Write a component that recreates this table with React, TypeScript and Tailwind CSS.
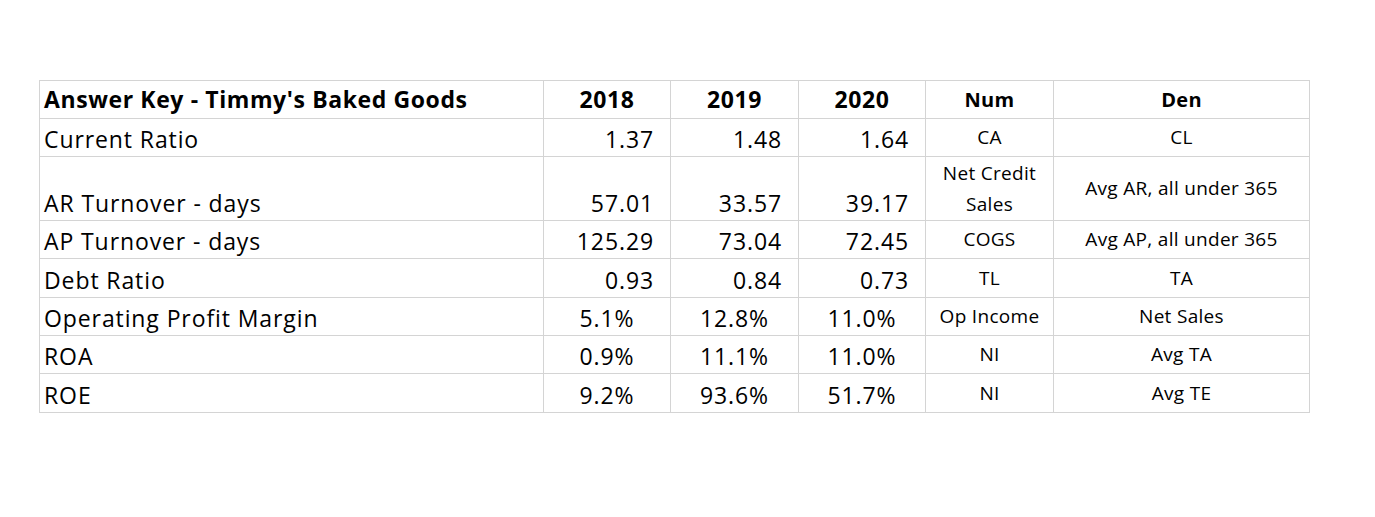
const rows = [
  { label: 'Current Ratio', v: ['1.37', '1.48', '1.64'], pct: false, num: 'CA', den: 'CL', h: 'h-[38px]' },
  { label: 'AR Turnover - days', v: ['57.01', '33.57', '39.17'], pct: false, num: 'Net Credit Sales', den: 'Avg AR, all under 365', tall: true, h: 'h-[64px]' },
  { label: 'AP Turnover - days', v: ['125.29', '73.04', '72.45'], pct: false, num: 'COGS', den: 'Avg AP, all under 365', h: 'h-[38px]' },
  { label: 'Debt Ratio', v: ['0.93', '0.84', '0.73'], pct: false, num: 'TL', den: 'TA', h: 'h-[39px]' },
  { label: 'Operating Profit Margin', v: ['5.1%', '12.8%', '11.0%'], pct: true, num: 'Op Income', den: 'Net Sales', h: 'h-[38px]' },
  { label: 'ROA', v: ['0.9%', '11.1%', '11.0%'], pct: true, num: 'NI', den: 'Avg TA', h: 'h-[38px]' },
  { label: 'ROE', v: ['9.2%', '93.6%', '51.7%'], pct: true, num: 'NI', den: 'Avg TE', h: 'h-[39px]' },
];

const cell = 'border border-[#d4d4d4]';

export default function App() {
  return (
    <div className="w-[1375px] h-[517px] bg-white pt-[80px] pl-[39px] text-black" style={{ fontFamily: '"Open Sans", "Liberation Sans", sans-serif' }}>
      <table className="table-fixed border-collapse">
        <colgroup>
          <col className="w-[504px]" />
          <col className="w-[127px]" />
          <col className="w-[128px]" />
          <col className="w-[127px]" />
          <col className="w-[128px]" />
          <col className="w-[256px]" />
        </colgroup>
        <thead>
          <tr className="h-[38px] font-bold text-[23px] tracking-[0.6px]">
            <th className={`${cell} text-left pl-[4px] align-middle`}>Answer Key - Timmy's Baked Goods</th>
            <th className={`${cell} text-center`}>2018</th>
            <th className={`${cell} text-center`}>2019</th>
            <th className={`${cell} text-center`}>2020</th>
            <th className={`${cell} text-center text-[20px] tracking-[0.3px]`}>Num</th>
            <th className={`${cell} text-center text-[20px] tracking-[0.3px]`}>Den</th>
          </tr>
        </thead>
        <tbody>
          {rows.map((r) => (
            <tr key={r.label} className={r.h}>
              <td className={`${cell} pl-[4px] align-bottom pb-[2px] text-[23px] leading-[30px] tracking-[0.9px]`}>{r.label}</td>
              {r.v.map((x, i) => (
                <td
                  key={i}
                  className={
                    r.pct
                      ? `${cell} text-center align-bottom pb-[2px] text-[23px] leading-[30px] tracking-[0.9px]`
                      : `${cell} text-right pr-[16px] align-bottom pb-[2px] text-[23px] leading-[30px] tracking-[0.9px]`
                  }
                >
                  {x}
                </td>
              ))}
              <td
                className={
                  r.tall
                    ? `${cell} text-center align-middle text-[19px] tracking-[0.3px] leading-[31px] px-[10px]`
                    : `${cell} text-center align-middle text-[19px] tracking-[0.3px]`
                }
              >
                {r.num}
              </td>
              <td className={`${cell} text-center align-middle text-[19px] tracking-[0.3px]`}>{r.den}</td>
            </tr>
          ))}
        </tbody>
      </table>
    </div>
  );
}
